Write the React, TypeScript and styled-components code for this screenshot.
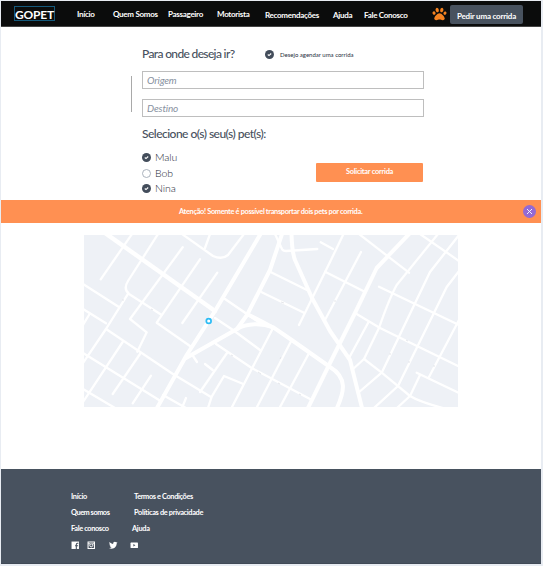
import React from 'react';
import styled, { createGlobalStyle } from 'styled-components';
import { FaPaw, FaTwitter } from 'react-icons/fa';

const GlobalStyle = createGlobalStyle`
  * { box-sizing: border-box; }
  body { margin: 0; background: #e8ecf2; font-family: Lato, sans-serif; color: #47505d; }
  button, input { font-family: inherit; }
`;

const Page = styled.div`
  width: 543px;
  height: 566px;
  padding: 1px 2px 2px 1px;
  overflow: hidden;
`;

const Surface = styled.div`
  height: 563px;
  background: #fff;
  display: flex;
  flex-direction: column;
`;

const Header = styled.header`
  height: 26px;
  flex: none;
  background: #0b0c0c;
  border-bottom: 1px solid #444;
  display: flex;
  align-items: flex-start;
`;

const Logo = styled.div`
  width: 41px;
  height: 15px;
  margin: 5px 0 0 13px;
  border: 1px solid #155a7c;
  color: #fff;
  font-size: 12px;
  font-weight: 700;
  line-height: 15px;
  letter-spacing: -0.2px;
  white-space: nowrap;
`;

const Nav = styled.nav`
  display: grid;
  grid-template-columns: 36px 55px 49px 48px 68px 31px 68px;
  margin: 8px 0 0 22px;
`;

const NavLink = styled.a<{ $drop?: number }>`
  color: #fff;
  font-size: 8px;
  line-height: 11px;
  font-weight: 700;
  white-space: nowrap;
  letter-spacing: -0.29px;
  padding-top: ${p => p.$drop ?? 0}px;
`;

const Paw = styled(FaPaw)`
  width: 15px;
  height: 14px;
  margin-top: 6px;
  color: #f58220;
  flex: none;
`;

const HeaderButton = styled.button`
  width: 73px;
  height: 19px;
  margin: 4px 0 0 3px;
  padding: 2px 0 0;
  border: 0;
  border-radius: 2px;
  background: #48525f;
  color: #fff;
  font-size: 8px;
  line-height: 10px;
  font-weight: 700;
  letter-spacing: -0.2px;
  white-space: nowrap;
`;

const RideForm = styled.form`
  height: 173px;
  flex: none;
  padding: 20px 0 0 130px;
  display: grid;
  grid-template-columns: 11px 282px;
  grid-template-rows: 24px 54px 99px;
`;

const TitleRow = styled.div`
  grid-column: 2;
  display: grid;
  grid-template-columns: 123px 1fr;
`;

const Heading = styled.h2<{ $tracking: number }>`
  margin: 0;
  font-size: 12px;
  line-height: 14px;
  font-weight: 500;
  letter-spacing: ${p => p.$tracking}px;
  white-space: nowrap;
`;

const Schedule = styled.label`
  height: 15px;
  display: flex;
  align-items: center;
  gap: 6px;
  font-size: 6px;
  color: #252e3d;
  white-space: nowrap;
`;

const RouteLine = styled.div`
  width: 1px;
  height: 36px;
  margin-top: 5px;
  background: #a9a9a9;
`;

const Fields = styled.div`
  display: flex;
  flex-direction: column;
  gap: 10px;
`;

const Field = styled.input`
  width: 282px;
  height: 18px;
  padding: 0 4px;
  border: 1px solid #bebebe;
  border-radius: 0;
  font-size: 10px;
  font-style: italic;
  letter-spacing: -0.15px;
  outline: 0;
  &::placeholder { color: #8791a0; opacity: 1; }
`;

const Pets = styled.div`
  grid-column: 2;
  display: grid;
  grid-template-columns: 174px 108px;
  grid-template-rows: 25px 1fr;
  padding-top: 2px;
`;

const PetHeading = styled.div`
  grid-column: 1 / 3;
`;

const PetList = styled.div`
  display: grid;
  grid-template-rows: 16px 16px 14px;
  align-content: start;
  margin-top: -3px;
`;

const Pet = styled.label`
  display: flex;
  align-items: center;
  gap: 4px;
  font-size: 10.5px;
  font-weight: 300;
  letter-spacing: -0.1px;
  color: #1d2735;
`;

const SubmitButton = styled.button`
  width: 107px;
  height: 19px;
  margin-top: 11px;
  padding: 0 0 2px;
  border: 0;
  border-radius: 1px;
  background: #ff9052;
  color: #fff;
  font-size: 7.4px;
  font-weight: 700;
  letter-spacing: -0.25px;
  line-height: 17px;
`;

const Alert = styled.div`
  height: 23px;
  flex: none;
  padding: 0 5px 0 178px;
  background: #ff9052;
  color: #fff;
  display: flex;
  align-items: center;
  justify-content: space-between;
  font-size: 7.4px;
  font-weight: 700;
  letter-spacing: -0.33px;
  white-space: nowrap;
`;

const CloseButton = styled.button`
  width: 13px;
  height: 13px;
  padding: 0;
  border: 0;
  border-radius: 50%;
  background: #936ad5;
  display: flex;
  align-items: center;
  justify-content: center;
`;

const MapArea = styled.main`
  flex: 1;
  padding: 12px 0 0 83px;
`;

const MapDrawing = styled.svg`
  display: block;
  width: 374px;
  height: 172px;
  background: #eef1f6;
`;

const Footer = styled.footer`
  height: 95px;
  flex: none;
  background: #48525f;
  border-bottom: 1px solid #404956;
  padding: 22px 0 0 70px;
`;

const FooterLinks = styled.div`
  display: grid;
  grid-template-columns: 63px 90px;
  grid-template-rows: repeat(3, 16px);
`;

const FooterLink = styled.a<{ $shift?: boolean; $tracking: number }>`
  color: #fff;
  font-size: 7.4px;
  line-height: 12px;
  font-weight: 700;
  letter-spacing: ${p => p.$tracking}px;
  margin-left: ${p => (p.$shift ? -2 : 0)}px;
  white-space: nowrap;
`;

const Social = styled.div`
  display: grid;
  grid-template-columns: 16px 22px 21px 9px;
  margin-top: 2px;
  color: #fff;
  svg { width: 8.5px; height: 8.5px; }
`;

const CheckDot = ({ checked = true }: { checked?: boolean }) => (
  <svg width="9" height="9" viewBox="0 0 9 9">
    {checked ? (
      <>
        <circle cx="4.5" cy="4.5" r="4.5" fill="#434d5b" />
        <path d="M2.8 4.5 4 5.6 6.2 3.5" fill="none" stroke="#fff" strokeWidth="1.1" />
      </>
    ) : (
      <circle cx="4.5" cy="4.5" r="4" fill="#fff" stroke="#a2a9b5" strokeWidth=".9" />
    )}
  </svg>
);

const FacebookIcon = () => (
  <svg viewBox="0 0 8 8">
    <path d="M.5 .5h7v7h-7z" fill="#fff" />
    <path d="M5 7.6V3.1q0-1 1-1h.9M3.8 4.5h2.9" fill="none" stroke="#48525f" strokeWidth="1" />
  </svg>
);

const InstagramIcon = () => (
  <svg viewBox="0 0 8 8">
    <path d="M1 1h6v6H1z" fill="none" stroke="#fff" strokeWidth="1" />
    <path d="M1 2.6h2M5 2.6h2" stroke="#fff" strokeWidth=".9" />
    <circle cx="4" cy="4.1" r="1.4" fill="none" stroke="#fff" strokeWidth=".9" />
  </svg>
);

const YoutubeIcon = () => (
  <svg viewBox="0 0 8 8">
    <rect x=".5" y="1.5" width="7" height="5" rx=".5" fill="#fff" />
    <path d="M3.2 2.9v2.2L5.1 4z" fill="#48525f" />
  </svg>
);

const avenues = [
  'M157 408 186.7 355 215 311 260.5 234',
  'M186 358 237 329C247 323 262 323 273.3 327.3L291.7 340 330 367C348 378 344 392 337 408',
  'M282 234 270 270 247 315 237 329',
  'M291.5 234Q292 252 295 260L312 298 330 331 350 360 362 408',
  'M308 408 330 363 355 313 376.7 268 409 234',
  'M247 314Q259 320 272 327',
];

const streets = [
  'M132 234 100.7 279.3', 'M158 234 128 281Q123 289 129 294L161.7 315',
  'M182.7 247.3 130 319 146.7 332.3 137.3 351.7',
  'M200 259.3 156.7 322.7 190 346', 'M217.3 272.7 182.3 323',
  'M83 284 119.3 307.3', 'M128.3 293.3 106 329 83 363', 'M83 309 106 323.3', 'M89 315 83 325',
  'M106 329 173.3 374.3 211 397', 'M83 353 159 400', 'M163 395 186 408', 'M83 389 115 408',
  'M122.7 342 83 402', 'M140.7 353 112.7 394', 'M151 375.7 132.7 403.3', 'M186 398 182 408',
  'M193 356 197 362', 'M182 234 213 256Q222 260 228 255L244 234', 'M205 248 210 234',
  'M275 234 282 249Q283 251 286 251L317.3 249', 'M270 271.7 307 290', 'M261.7 292.3 304 312.7',
  'M343.5 234 330 262 299 325', 'M320.7 242.3 333 249', 'M325 271.7 363.3 291',
  'M225 299 260 323', 'M215 318 233 330 260 350', 'M216 344 251.7 368 310 399',
  'M273 328 231.5 408', 'M291.7 340 256.5 408', 'M308 355 279.5 408', 'M227 353 200 392',
  'M205 364 212.7 370', 'M243.3 384 224 376 211.7 396.7 208 408',
  'M361 252 325 320', 'M359 234 409 272.7', 'M438 234 396.7 285Q389 299 379 328L364 359 352 370',
  'M459 235 430 272 381.7 372.7 358 393', 'M459 271 446.7 287 398 386 374 408',
  'M459 320 429 377', 'M420 375 410 396 397 408', 'M416.7 372.7 459 393',
  'M379 286.7 459 325', 'M355 313 380 328 459 366.5', 'M368 323 349 358',
  'M364 359 381.7 372.7 410 396Q420 402 443 408', 'M420 234 459 261',
];

const CityMap = () => (
  <MapDrawing viewBox="84 235 374 172" aria-label="Mapa">
    <g fill="none" stroke="#fff" strokeLinejoin="round" strokeLinecap="round">
      <g strokeWidth="2.3">{streets.map(d => <path key={d} d={d} />)}</g>
      <g strokeWidth="4">{avenues.map(d => <path key={d} d={d} />)}</g>
      <path d="M105 233 215 311" strokeWidth="4.4" />
    </g>
    <g stroke="#dde0e4" strokeWidth=".8">
      <path d="M123 301v-2M151 309l2 1M281 302l3 1M231 355l2 1M258 372l3 2M280 359l1-2M278 383l2 1M299 394l2 1M335 302v-2M406 340l2 1M390 355v-2M409 363v-2M434 367v-2" />
    </g>
    <circle cx="208.7" cy="321" r="2.4" fill="#fff" stroke="#2dbcf5" strokeWidth="1.7" />
  </MapDrawing>
);

export default function App() {
  return (
    <>
      <GlobalStyle />
      <Page>
        <Surface>
          <Header>
            <Logo>GOPET</Logo>
            <Nav>
              <NavLink>Início</NavLink>
              <NavLink>Quem Somos</NavLink>
              <NavLink>Passageiro</NavLink>
              <NavLink>Motorista</NavLink>
              <NavLink $drop={1}>Recomendações</NavLink>
              <NavLink $drop={1}>Ajuda</NavLink>
              <NavLink $drop={1}>Fale Conosco</NavLink>
            </Nav>
            <Paw />
            <HeaderButton>Pedir uma corrida</HeaderButton>
          </Header>
          <RideForm>
            <TitleRow>
              <Heading $tracking={-0.65}>Para onde deseja ir?</Heading>
              <Schedule><CheckDot />Desejo agendar uma corrida</Schedule>
            </TitleRow>
            <RouteLine />
            <Fields>
              <Field placeholder="Origem" />
              <Field placeholder="Destino" />
            </Fields>
            <Pets>
              <PetHeading><Heading $tracking={-0.52}>Selecione o(s) seu(s) pet(s):</Heading></PetHeading>
              <PetList>
                <Pet><CheckDot />Malu</Pet>
                <Pet><CheckDot checked={false} />Bob</Pet>
                <Pet><CheckDot />Nina</Pet>
              </PetList>
              <SubmitButton type="button">Solicitar corrida</SubmitButton>
            </Pets>
          </RideForm>
          <Alert>
            Atenção! Somente é possível transportar dois pets por corrida.
            <CloseButton aria-label="Fechar">
              <svg width="7" height="7" viewBox="0 0 7 7"><path d="M1 1 6 6M6 1 1 6" stroke="#fff" strokeWidth=".9" /></svg>
            </CloseButton>
          </Alert>
          <MapArea><CityMap /></MapArea>
          <Footer>
            <FooterLinks>
              <FooterLink $tracking={-0.3}>Início</FooterLink>
              <FooterLink $tracking={-0.38}>Termos e Condições</FooterLink>
              <FooterLink $tracking={-0.48}>Quem somos</FooterLink>
              <FooterLink $tracking={-0.34}>Políticas de privacidade</FooterLink>
              <FooterLink $tracking={-0.37}>Fale conosco</FooterLink>
              <FooterLink $tracking={-0.3} $shift>Ajuda</FooterLink>
            </FooterLinks>
            <Social>
              <FacebookIcon /><InstagramIcon /><FaTwitter /><YoutubeIcon />
            </Social>
          </Footer>
        </Surface>
      </Page>
    </>
  );
}
